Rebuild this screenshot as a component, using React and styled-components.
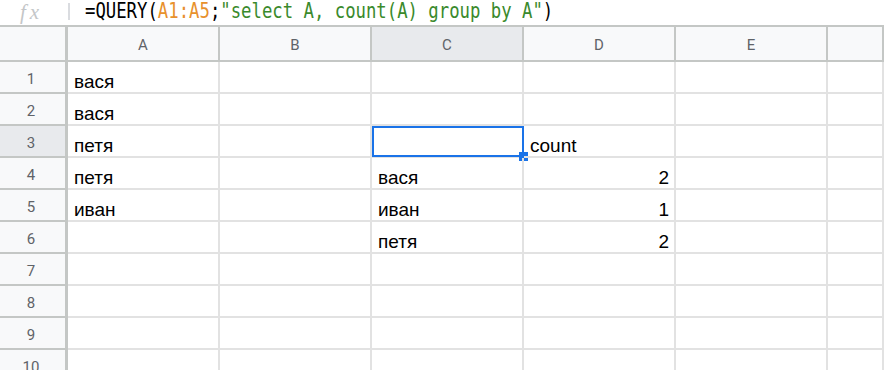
import styled, { createGlobalStyle } from "styled-components";

const GlobalStyle = createGlobalStyle`
  html, body {
    margin: 0;
    padding: 0;
    height: 370px;
    overflow: hidden;
    background: #ffffff;
  }
  * {
    box-sizing: border-box;
  }
`;

const colors = {
  grid: "#e2e2e2",
  headerBg: "#f8f9fa",
  headerActive: "#e8eaed",
  headerLine: "#c4c7c5",
  headerText: "#5f6368",
  blue: "#1a73e8",
};

const Page = styled.div`
  width: 884px;
  height: 370px;
  overflow: hidden;
  font-family: "Liberation Sans", Arial, sans-serif;
`;

const FormulaBar = styled.div`
  display: flex;
  align-items: flex-start;
  height: 27px;
  border-bottom: 2px solid ${colors.headerLine};
`;

const FxLabel = styled.div`
  width: 68px;
  padding-left: 20px;
  font-family: "Liberation Serif", "Times New Roman", serif;
  font-style: italic;
  font-size: 21px;
  line-height: normal;
  letter-spacing: 4px;
  color: #c4c6c8;
`;

const Divider = styled.div`
  width: 2px;
  height: 17px;
  margin-top: 3px;
  background: #dadce0;
`;

const Formula = styled.div`
  display: inline-block;
  margin-left: 15px;
  padding-top: 1px;
  font-family: "DejaVu Sans Mono", "Liberation Mono", monospace;
  font-size: 17.3px;
  line-height: 20px;
  color: #000;
  white-space: pre;
  transform: scaleY(1.18);
`;

const Token = styled.span`
  color: ${(p) => p.$color};
`;

const Sheet = styled.div`
  display: grid;
  grid-template-columns: 68px repeat(5, 152px) 1fr;
  grid-template-rows: 35px;
  grid-auto-rows: 32px;
`;

const Corner = styled.div`
  background: ${colors.headerBg};
  border-right: 3px solid ${colors.headerLine};
  border-bottom: 2px solid ${colors.headerLine};
`;

const ColHeader = styled.div`
  display: flex;
  align-items: center;
  justify-content: center;
  padding-top: 3px;
  background: ${(p) => (p.$active ? colors.headerActive : colors.headerBg)};
  border-right: 2px solid ${colors.headerLine};
  border-bottom: 2px solid ${colors.headerLine};
  font-family: Roboto, "Liberation Sans", sans-serif;
  font-size: 15px;
  color: ${colors.headerText};
`;

const RowHeader = styled.div`
  display: flex;
  align-items: center;
  justify-content: center;
  padding: 4px 3px 0 0;
  background: ${(p) => (p.$active ? colors.headerActive : colors.headerBg)};
  border-right: 3px solid ${colors.headerLine};
  border-bottom: 2px solid ${colors.headerLine};
  font-family: Roboto, "Liberation Sans", sans-serif;
  font-size: 15px;
  color: ${colors.headerText};
`;

const Cell = styled.div`
  position: relative;
  display: flex;
  align-items: flex-end;
  justify-content: ${(p) => (p.$right ? "flex-end" : "flex-start")};
  padding: 0 5px 1px 6px;
  border-right: 2px solid ${colors.grid};
  border-bottom: 2px solid ${colors.grid};
  font-size: 19px;
  line-height: 19px;
  color: #000;
  white-space: nowrap;
`;

const Selection = styled.div`
  position: absolute;
  left: 0;
  top: 0;
  right: -2px;
  bottom: -1px;
  border: 2px solid ${colors.blue};
  pointer-events: none;
`;

const Handle = styled.div`
  position: absolute;
  right: -6px;
  bottom: -6px;
  width: 9px;
  height: 9px;
  background: ${colors.blue};
`;

const columns = ["A", "B", "C", "D", "E", ""];

const data = {
  1: { A: "вася" },
  2: { A: "вася" },
  3: { A: "петя", D: "count" },
  4: { A: "петя", C: "вася", D: 2 },
  5: { A: "иван", C: "иван", D: 1 },
  6: { C: "петя", D: 2 },
};

export default function App() {
  const rows = Array.from({ length: 10 }, (_, i) => i + 1);
  return (
    <Page>
      <GlobalStyle />
      <FormulaBar>
        <FxLabel>fx</FxLabel>
        <Divider />
        <Formula>
          =QUERY(<Token $color="#e8912d">A1:A5</Token>;
          <Token $color="#3a8a2c">"select A, count(A) group by A"</Token>)
        </Formula>
      </FormulaBar>
      <Sheet>
        <Corner />
        {columns.map((c, i) => (
          <ColHeader key={i} $active={c === "C"}>
            {c}
          </ColHeader>
        ))}
        {rows.map((r) => [
          <RowHeader key={`h${r}`} $active={r === 3}>
            {r}
          </RowHeader>,
          ...columns.map((c, i) => {
            const v = data[r] && data[r][c];
            const active = r === 3 && c === "C";
            return (
              <Cell key={`${r}-${i}`} $right={typeof v === "number"}>
                {v}
                {active && (
                  <Selection>
                    <Handle />
                  </Selection>
                )}
              </Cell>
            );
          }),
        ])}
      </Sheet>
    </Page>
  );
}
